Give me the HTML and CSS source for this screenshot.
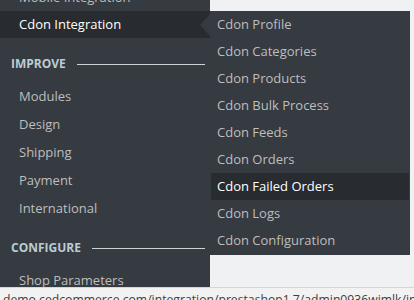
FILE: index.html
```html
<!DOCTYPE html>
<html lang="en">
<head>
    <meta charset="UTF-8">
    <meta name="viewport" content="width=device-width, initial-scale=1.0">
    <title>Cdon Integration</title>
    <link rel="stylesheet" href="styles.css">
</head>
<body>

<div class="app">
    <nav class="sidebar">
        <ul class="menu">
            <li class="item item-cut">Mobile Integration</li>
            <li class="item active">
                Cdon Integration
                <ul class="submenu">
                    <li>Cdon Profile</li>
                    <li>Cdon Categories</li>
                    <li>Cdon Products</li>
                    <li>Cdon Bulk Process</li>
                    <li>Cdon Feeds</li>
                    <li>Cdon Orders</li>
                    <li class="current">Cdon Failed Orders</li>
                    <li>Cdon Logs</li>
                    <li>Cdon Configuration</li>
                </ul>
            </li>
            <li class="title">Improve</li>
            <li class="item">Modules</li>
            <li class="item">Design</li>
            <li class="item">Shipping</li>
            <li class="item">Payment</li>
            <li class="item">International</li>
            <li class="title">Configure</li>
            <li class="item">Shop Parameters</li>
        </ul>
    </nav>
    <div class="content"></div>
</div>

<div class="status">demo.cedcommerce.com/integration/prestashop1.7/admin0936wimlk/index.php?controller=AdminCdonFailedOrders</div>

</body>
</html>
```

FILE: styles.css
```css
body {
    font-family: "Open Sans", "DejaVu Sans", sans-serif;
    font-size: 13px;
    background-color: #eff1f2;
    margin: 0;
    overflow: hidden;
}
ul {
    list-style: none;
    margin: 0;
    padding: 0;
}
.app {
    display: flex;
    height: 300px;
}
.sidebar {
    width: 210px;
    background-color: #363a41;
    flex-shrink: 0;
}
.menu {
    margin-top: -17px;
}
.item {
    height: 28px;
    line-height: 28px;
    padding-left: 19px;
    color: #bebebe;
    white-space: nowrap;
}
.item.active {
    position: relative;
    height: 27px;
    line-height: 27px;
    background-color: #282b30;
    color: #fff;
}
.item.active::after {
    content: "";
    position: absolute;
    right: 0;
    top: 3px;
    border-top: 11px solid transparent;
    border-bottom: 11px solid transparent;
    border-right: 10px solid #363a41;
}
.title {
    display: flex;
    align-items: center;
    height: 20px;
    line-height: 20px;
    padding: 16px 5px 8px 11px;
    color: #bbcdd2;
    font-size: 12px;
    font-weight: 700;
    text-transform: uppercase;
}
.title::after {
    content: "";
    flex: 1;
    height: 1px;
    margin-left: 11px;
    background-color: #c9d3d6;
}
.submenu {
    position: absolute;
    left: 100%;
    top: 0;
    width: 198px;
    padding: 0 1px 1px;
    background-color: #363a41;
    z-index: 2;
}
.submenu li {
    height: 27px;
    line-height: 27px;
    padding-left: 6px;
    color: #bebebe;
}
.submenu li.current {
    background-color: #282b30;
    color: #fff;
}
.content {
    flex: 1;
}
.status {
    position: fixed;
    left: 0;
    right: 0;
    bottom: 0;
    height: 9px;
    padding: 3px 0 0 3px;
    background-color: #f2f2f2;
    border-top: 1px solid #d6d6d6;
    color: #3c3c3c;
    font-size: 12.2px;
    line-height: 17px;
    white-space: nowrap;
    overflow: hidden;
    z-index: 3;
}
```
